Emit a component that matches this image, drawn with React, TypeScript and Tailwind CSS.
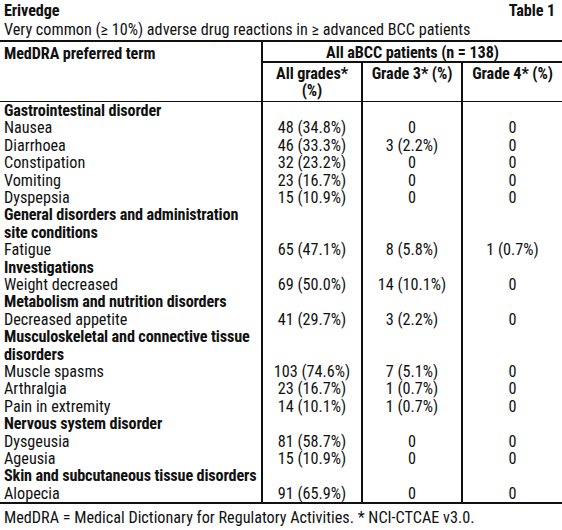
type Row =
  | { kind: "cat"; label: string }
  | { kind: "item"; label: string; all: string; g3: string; g4: string };

const rows: Row[] = [
  { kind: "cat", label: "Gastrointestinal disorder" },
  { kind: "item", label: "Nausea", all: "48 (34.8%)", g3: "0", g4: "0" },
  { kind: "item", label: "Diarrhoea", all: "46 (33.3%)", g3: "3 (2.2%)", g4: "0" },
  { kind: "item", label: "Constipation", all: "32 (23.2%)", g3: "0", g4: "0" },
  { kind: "item", label: "Vomiting", all: "23 (16.7%)", g3: "0", g4: "0" },
  { kind: "item", label: "Dyspepsia", all: "15 (10.9%)", g3: "0", g4: "0" },
  { kind: "cat", label: "General disorders and administration" },
  { kind: "cat", label: "site conditions" },
  { kind: "item", label: "Fatigue", all: "65 (47.1%)", g3: "8 (5.8%)", g4: "1 (0.7%)" },
  { kind: "cat", label: "Investigations" },
  { kind: "item", label: "Weight decreased", all: "69 (50.0%)", g3: "14 (10.1%)", g4: "0" },
  { kind: "cat", label: "Metabolism and nutrition disorders" },
  { kind: "item", label: "Decreased appetite", all: "41 (29.7%)", g3: "3 (2.2%)", g4: "0" },
  { kind: "cat", label: "Musculoskeletal and connective tissue" },
  { kind: "cat", label: "disorders" },
  { kind: "item", label: "Muscle spasms", all: "103 (74.6%)", g3: "7 (5.1%)", g4: "0" },
  { kind: "item", label: "Arthralgia", all: "23 (16.7%)", g3: "1 (0.7%)", g4: "0" },
  { kind: "item", label: "Pain in extremity", all: "14 (10.1%)", g3: "1 (0.7%)", g4: "0" },
  { kind: "cat", label: "Nervous system disorder" },
  { kind: "item", label: "Dysgeusia", all: "81 (58.7%)", g3: "0", g4: "0" },
  { kind: "item", label: "Ageusia", all: "15 (10.9%)", g3: "0", g4: "0" },
  { kind: "cat", label: "Skin and subcutaneous tissue disorders" },
  { kind: "item", label: "Alopecia", all: "91 (65.9%)", g3: "0", g4: "0" },
];

export default function App() {
  return (
    <div className="h-[530px] w-[562px] bg-white font-['Roboto_Condensed','Roboto',sans-serif] text-[16.2px] leading-[19px] text-[#111]">
      {/* Title */}
      <div className="flex items-end justify-between pl-1 pr-[7px] pt-[1px]">
        <span className="font-bold tracking-[-0.1px]">Erivedge</span>
        <span className="font-bold tracking-[-0.1px]">Table 1</span>
      </div>
      <div className="pl-1">
        Very common (≥ 10%) adverse drug reactions in ≥ advanced BCC patients
      </div>

      {/* Table */}
      <div className="mt-[1px] grid grid-cols-[263px_100px_100px_1fr] border-y-2 border-[#111]">
        {/* header */}
        <div className="row-span-2 border-r-2 border-b border-[#111] pl-1 pt-[2px] font-bold tracking-[-0.1px]">
          MedDRA preferred term
        </div>
        <div className="col-span-3 h-[21px] border-b-2 border-[#111] pt-[1px] text-center font-bold tracking-[-0.1px]">
          All aBCC patients (n = 138)
        </div>
        <div className="flex h-[39px] flex-col items-center border-r-2 border-b border-[#111] pt-[2px] font-bold leading-[17px] tracking-[-0.1px]">
          <span>All grades*</span>
          <span>(%)</span>
        </div>
        <div className="h-[39px] border-r-2 border-b border-[#111] pt-[2px] text-center font-bold leading-[17px] tracking-[-0.1px]">
          Grade 3* (%)
        </div>
        <div className="h-[39px] border-b border-[#111] pt-[2px] text-center font-bold leading-[17px] tracking-[-0.1px]">
          Grade 4* (%)
        </div>

        {/* body */}
        {rows.map((r, i) =>
          r.kind === "cat" ? (
            <div key={i} className="contents">
              <div className="h-[17.4px] whitespace-nowrap border-r-2 border-[#111] pl-1 font-bold leading-[17.4px] tracking-[-0.15px]">
                {r.label}
              </div>
              <div className="border-r-2 border-[#111]" />
              <div className="border-r-2 border-[#111]" />
              <div />
            </div>
          ) : (
            <div key={i} className="contents">
              <div className="h-[17.4px] border-r-2 border-[#111] pl-1 leading-[17.4px]">{r.label}</div>
              <div className="border-r-2 border-[#111] text-center leading-[17.4px]">{r.all}</div>
              <div className="border-r-2 border-[#111] text-center leading-[17.4px]">{r.g3}</div>
              <div className="text-center leading-[17.4px]">{r.g4}</div>
            </div>
          )
        )}
      </div>

      <div className="pl-1 pt-[4px]">
        MedDRA = Medical Dictionary for Regulatory Activities. * NCI-CTCAE v3.0.
      </div>
    </div>
  );
}
